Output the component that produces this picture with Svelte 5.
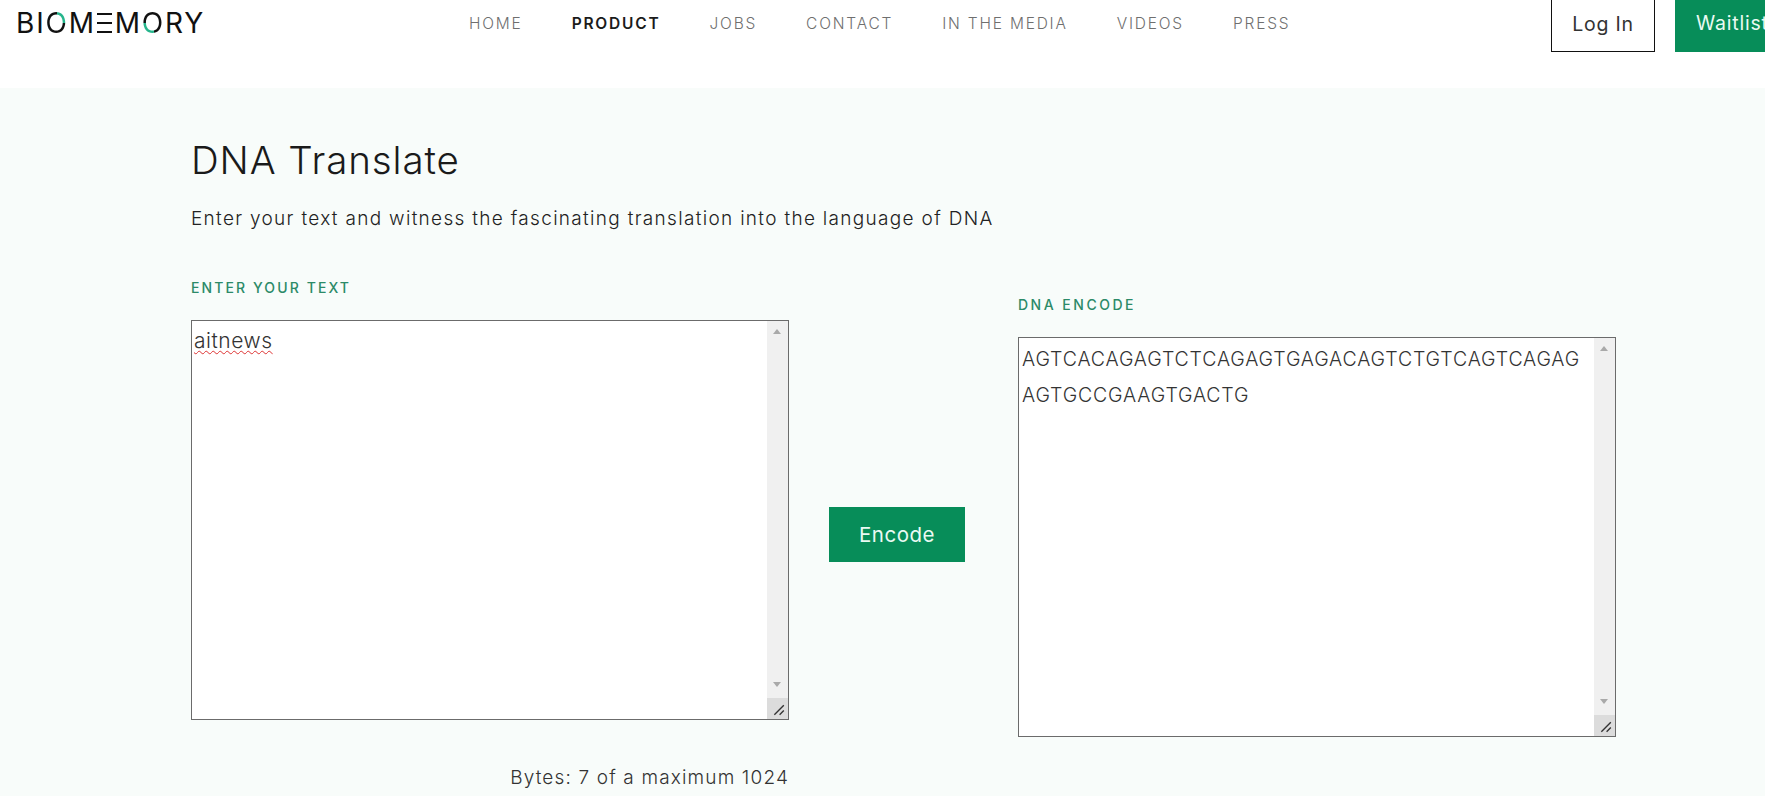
<script>
  const nav = ['HOME', 'PRODUCT', 'JOBS', 'CONTACT', 'IN THE MEDIA', 'VIDEOS', 'PRESS'];
</script>

<div class="page">
  <header>
    <div class="logo">BI<span class="ring first">O</span>M<span class="bars">E</span>M<span class="ring">O</span>RY</div>
    <nav>
      {#each nav as item}
        <a href="#top" class:active={item === 'PRODUCT'}>{item}</a>
      {/each}
    </nav>
    <div class="actions">
      <button class="login">Log In</button>
      <button class="waitlist">Waitlist</button>
    </div>
  </header>

  <main>
    <h1>DNA Translate</h1>
    <p class="sub">Enter your text and witness the fascinating translation into the language of DNA</p>

    <div class="tool">
      <section class="input">
        <div class="label">ENTER YOUR TEXT</div>
        <div class="box">
          <div class="text"><span class="typo">aitnews</span></div>
          <div class="bar" aria-hidden="true">
            <i class="up"></i><i class="down"></i>
            <svg class="grip" viewBox="0 0 20 20"><path d="M7 16 16 7M12 16 16 12" stroke="#333" stroke-width="1.3" fill="none"/></svg>
          </div>
        </div>
        <div class="bytes">Bytes: 7 of a maximum 1024</div>
      </section>

      <button class="encode">Encode</button>

      <section class="output">
        <div class="label">DNA ENCODE</div>
        <div class="box">
          <div class="text dna">AGTCACAGAGTCTCAGAGTGAGACAGTCTGTCAGTCAGAG<br />AGTGCCGAAGTGACTG</div>
          <div class="bar" aria-hidden="true">
            <i class="up"></i><i class="down"></i>
            <svg class="grip" viewBox="0 0 20 20"><path d="M7 16 16 7M12 16 16 12" stroke="#333" stroke-width="1.3" fill="none"/></svg>
          </div>
        </div>
      </section>
    </div>
  </main>
</div>

<style>
  :global(body) { margin: 0; background: #fff; }
  .page {
    width: 1765px; height: 796px; overflow: hidden; background: #fff;
    font-family: Inter, "Liberation Sans", sans-serif; color: #333;
  }
  header { height: 88px; position: relative; display: flex; align-items: flex-start; }
  .logo {
    margin: 7px 0 0 16px; width: 220px; font-size: 28px; line-height: 32px; font-weight: 400;
    letter-spacing: 1.85px; color: #111; white-space: nowrap;
  }
  .bars {
    color: transparent;
    background: linear-gradient(#111 0 0) 1px 7px / 15px 2px no-repeat,
      linear-gradient(#111 0 0) 1px 16px / 15px 2px no-repeat,
      linear-gradient(#111 0 0) 1px 25px / 15px 2px no-repeat;
  }
  .ring {
    color: transparent;
    background: conic-gradient(from 180deg, #26b58c 0 25%, #111 25% 100%);
    -webkit-background-clip: text; background-clip: text;
  }
  .ring.first { background-image: conic-gradient(from 0deg, #26b58c 0 25%, #111 25% 100%); }
  nav {
    position: absolute; left: 469px; top: 14px; display: flex; gap: 49px;
    font-size: 15.5px; line-height: 20px; letter-spacing: 1.8px; font-weight: 300;
  }
  nav a { color: #6f6f6f; text-decoration: none; white-space: nowrap; }
  nav a.active { color: #1b1b1b; font-weight: 600; }
  .actions { position: absolute; left: 1551px; top: -8px; display: flex; gap: 20px; }
  button { font-family: inherit; cursor: pointer; border-radius: 0; }
  .login {
    width: 104px; height: 60px; padding: 4px 0 0; background: #fff; border: 1px solid #111;
    font-size: 19.5px; letter-spacing: 0.8px; color: #333; font-weight: 400;
  }
  .waitlist {
    width: 130px; height: 60px; padding: 2px 0 0 21px; text-align: left; background: #078d59; border: 0;
    font-size: 19.5px; letter-spacing: 0.8px; color: #eafaf3; font-weight: 400; white-space: nowrap;
  }
  main { height: 708px; background: #f8fcfa; padding: 0 0 0 191px; box-sizing: border-box; }
  h1 {
    margin: 0; padding-top: 50px; font-size: 38.5px; line-height: 44px; font-weight: 300; color: #1a1a1a;
    letter-spacing: 0.9px;
  }
  .sub { margin: 25px 0 0; font-size: 19px; line-height: 24px; font-weight: 300; color: #222; letter-spacing: 1.31px; }
  .tool {
    display: grid; grid-template-columns: 598px 136px 611px; column-gap: 40px; margin-top: 48px;
    align-items: start;
  }
  .tool .output { margin-left: 13px; padding-top: 17px; }
  .label { font-size: 14px; line-height: 18px; letter-spacing: 2.1px; font-weight: 500; color: #2c8a68; height: 18px; }
  .output .label { letter-spacing: 2.5px; }
  .box {
    position: relative; margin-top: 23px; height: 400px; box-sizing: border-box;
    border: 1px solid #6b6b6b; background: #fff; display: flex;
  }
  .text { flex: 1; padding: 4px 2px; font-size: 21px; line-height: 32px; font-weight: 300; color: #333; letter-spacing: 0.55px; }
  .dna { font-size: 19.5px; letter-spacing: 0.82px; line-height: 36px; white-space: nowrap; padding: 3px 3px; }
  .typo { text-decoration: underline wavy #d33; text-decoration-thickness: 1px; text-underline-offset: 2px; }
  .bar { position: relative; width: 21px; background: #f0f0f0; flex: none; }
  .bar i { position: absolute; left: 6px; width: 0; height: 0; border-left: 4.5px solid transparent; border-right: 4.5px solid transparent; }
  .up { top: 8px; border-bottom: 5px solid #a9a9a9; }
  .down { bottom: 32px; border-top: 5px solid #a9a9a9; }
  .grip { position: absolute; right: 0; bottom: 0; width: 21px; height: 21px; background: #dcdcdc; }
  .bytes { text-align: right; margin-top: 46px; font-size: 19px; line-height: 24px; font-weight: 300; color: #333; letter-spacing: 1.15px; }
  .encode {
    margin-top: 228px; height: 55px; width: 136px; background: #078d59; color: #eafaf3; border: 0;
    font-size: 20.5px; letter-spacing: 0.5px; font-weight: 400;
  }
</style>
